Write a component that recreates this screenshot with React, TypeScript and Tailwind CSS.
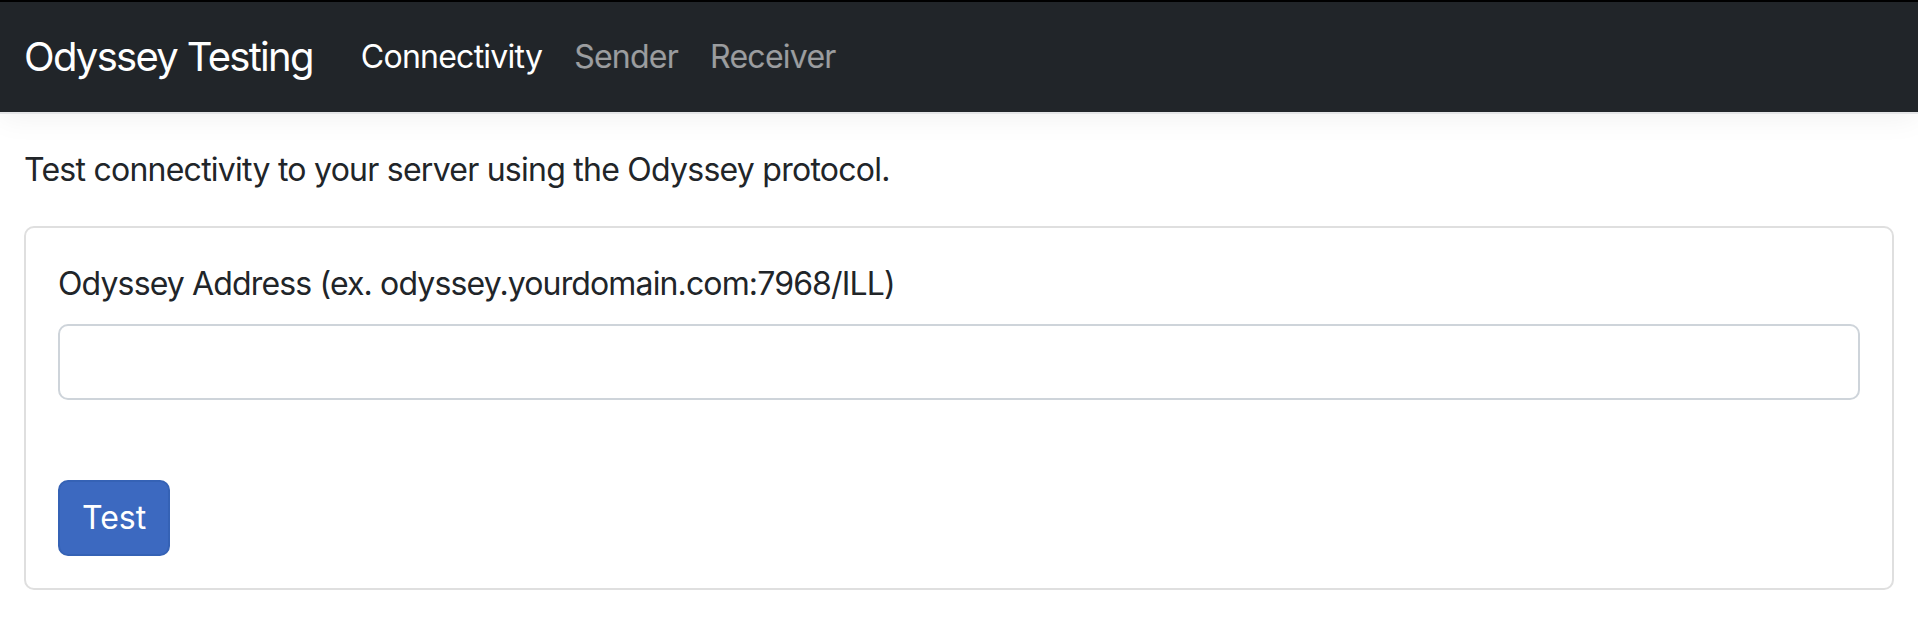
export default function App() {
  return (
    <div className="min-h-[642px] bg-white font-['Inter','Liberation_Sans',sans-serif] tracking-[-0.75px] text-[#212529]">
      <nav className="flex h-[112px] items-center border-t-2 border-black bg-[#212529] px-6 shadow-[0_2px_0_#e4e5e7,0_6px_28px_rgba(0,0,0,0.06)]">
        <a href="#" className="mr-8 text-[40px] leading-[60px] tracking-[-1.7px] text-white">
          Odyssey Testing
        </a>
        <div className="flex text-[32px] leading-[48px]">
          <a href="#" className="px-4 text-white">Connectivity</a>
          <a href="#" className="px-4 text-white/55">Sender</a>
          <a href="#" className="px-4 text-white/55">Receiver</a>
        </div>
      </nav>

      <main className="px-6 pt-[34px]">
        <p className="mb-8 text-[32px] leading-[48px]">
          Test connectivity to your server using the Odyssey protocol.
        </p>

        <div className="rounded-[10px] border-2 border-[#dfdfdf] p-8">
          <label className="mb-4 block text-[32px] leading-[48px] tracking-[-0.86px]">
            Odyssey Address (ex. odyssey.yourdomain.com:7968/ILL)
          </label>
          <input
            type="text"
            className="block h-[76px] w-full rounded-[10px] border-2 border-[#ced4da] px-6 text-[32px] outline-none"
          />
          <div className="mt-20">
            <button className="h-[76px] rounded-[10px] border-2 border-[#3562b5] bg-[#3c69c0] px-[22px] text-[32px] leading-[48px] tracking-normal text-white">
              Test
            </button>
          </div>
        </div>
      </main>
    </div>
  )
}
